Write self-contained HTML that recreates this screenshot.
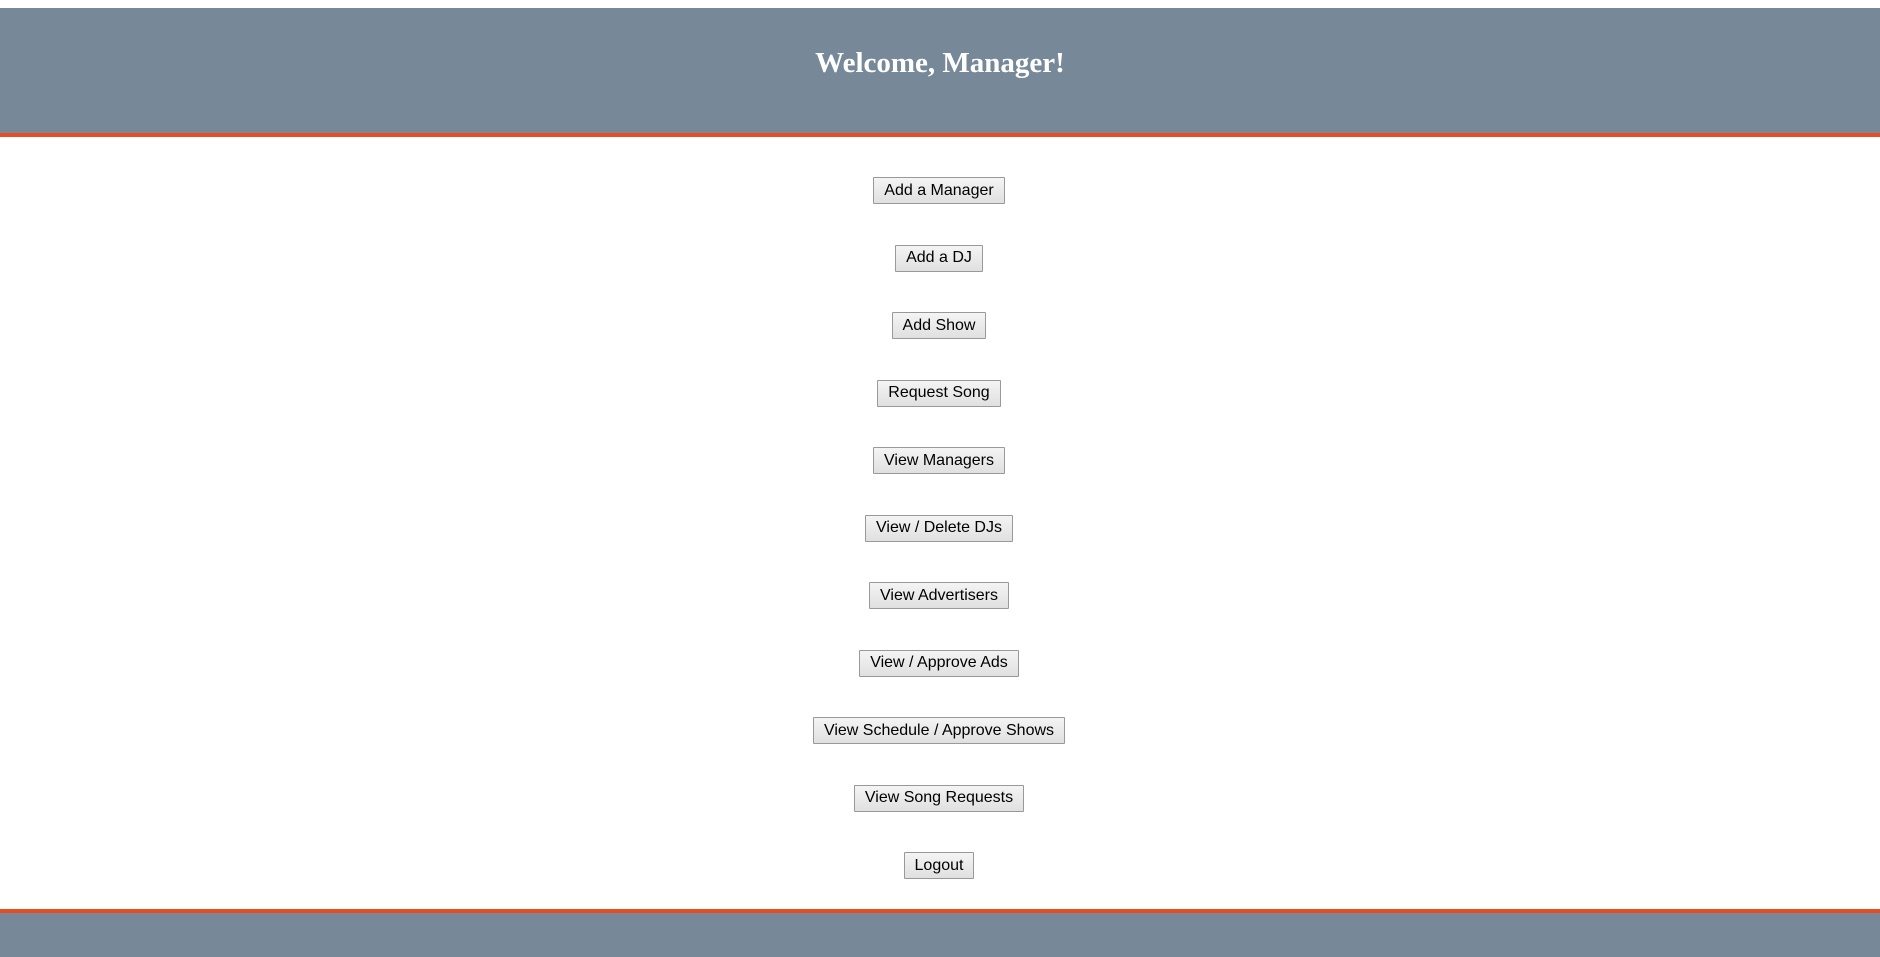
<!DOCTYPE html>
<html><head><meta charset="utf-8"><style>
html,body{margin:0;padding:0;background:#fff;width:1880px;height:957px;overflow:hidden}
.hdr{position:absolute;top:8px;left:0;width:1880px;height:125px;background:#778899;border-bottom:4px solid #e84c22}
.hdr h1{margin:0;position:absolute;top:37px;width:100%;text-align:center;font:bold 29px "Liberation Serif",serif;color:#fff;line-height:36px}
.btns{position:absolute;top:177px;left:-1px;width:1880px}
.btns button{display:block;margin:0 auto 40.5px;height:27px;padding:0 10px;font:16px "Liberation Sans",sans-serif;color:#000;background:linear-gradient(#f4f4f4,#e0e0e0);border:1px solid #999;border-radius:1px;box-sizing:border-box}
.ftr{position:absolute;top:909px;left:0;width:1880px;height:48px;background:#778899;border-top:4px solid #e84c22;box-sizing:border-box}
</style></head><body>
<div class="hdr"><h1>Welcome, Manager!</h1></div>
<div class="btns">
<button>Add a Manager</button>
<button>Add a DJ</button>
<button>Add Show</button>
<button>Request Song</button>
<button>View Managers</button>
<button>View / Delete DJs</button>
<button>View Advertisers</button>
<button>View / Approve Ads</button>
<button>View Schedule / Approve Shows</button>
<button>View Song Requests</button>
<button>Logout</button>
</div>
<div class="ftr"></div>
</body></html>
